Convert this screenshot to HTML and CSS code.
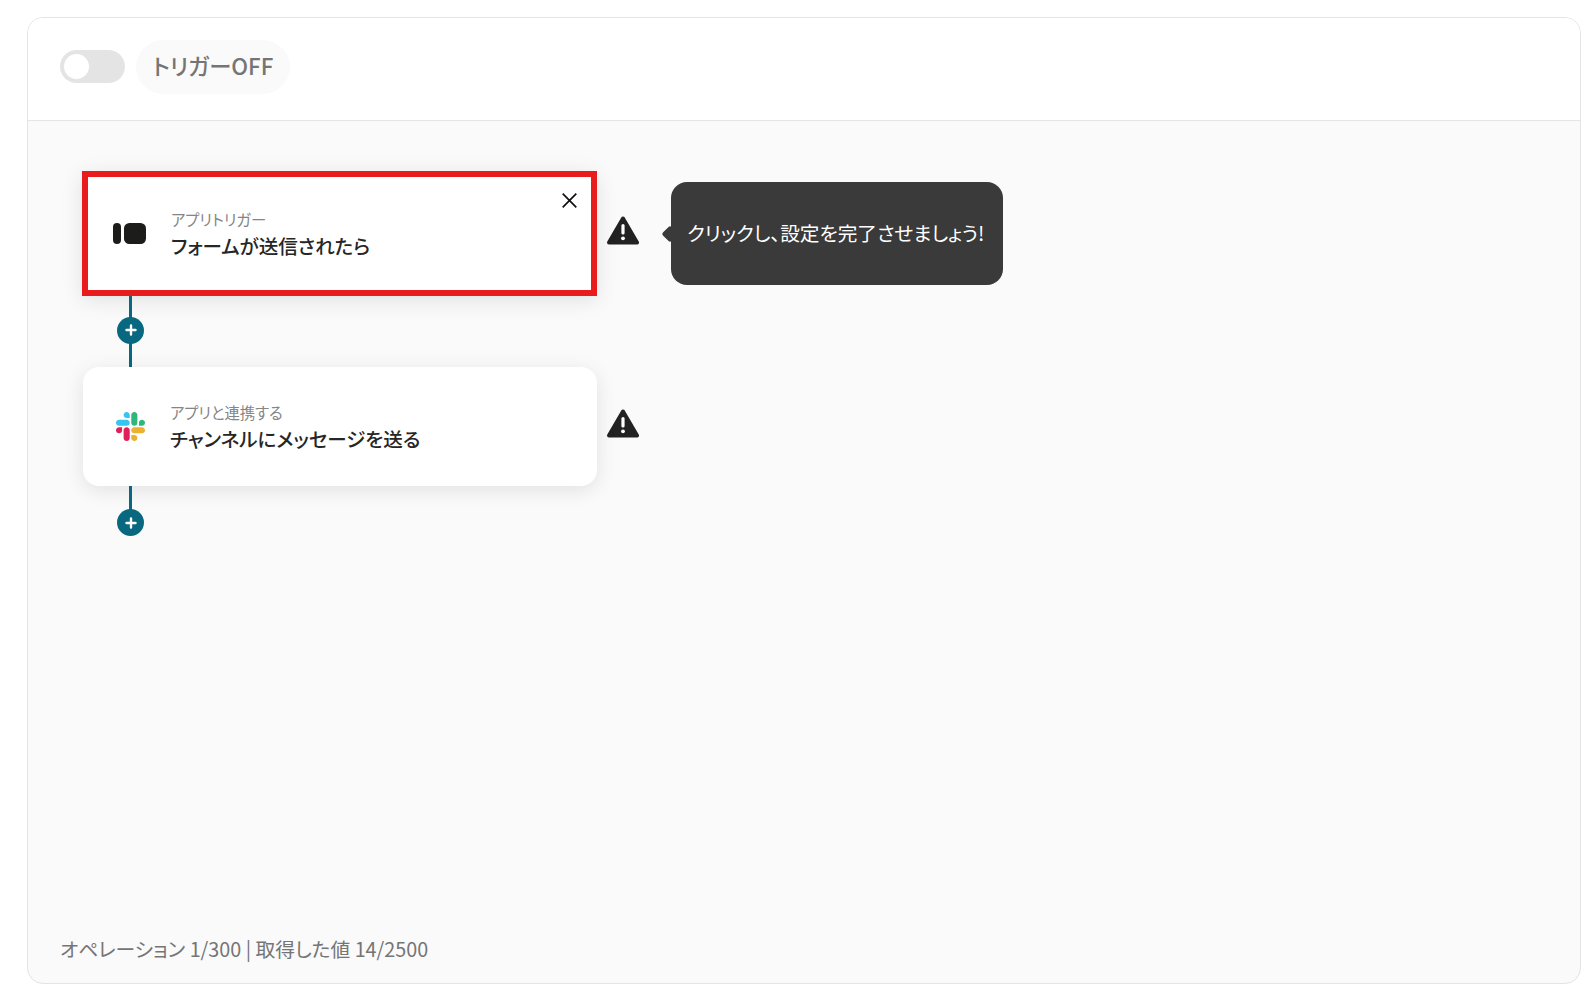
FILE: index.html
```html
<!DOCTYPE html>
<html lang="ja">
<head>
<meta charset="utf-8">
<title>フロー</title>
<link rel="stylesheet" href="styles.css">
</head>
<body>
<main class="frame">
  <header class="topbar">
    <span class="toggle"><span class="knob"></span></span>
    <span class="status">トリガーOFF</span>
  </header>
  <section class="canvas">
    <div class="step">
      <article class="card card-active">
        <svg class="app-icon form-icon" viewBox="0 0 33 21"><rect x="0" y="0" width="8" height="21" rx="4" fill="#1c1c1a"/><rect x="11" y="0" width="22" height="21" rx="5.5" fill="#1c1c1a"/></svg>
        <div class="card-text">
          <div class="card-label">アプリトリガー</div>
          <div class="card-title">フォームが送信されたら</div>
        </div>
        <svg class="close" viewBox="0 0 15 15"><path d="M.7.7l13.6 13.6M14.3.7L.7 14.3" stroke="#111" stroke-width="1.7" fill="none"/></svg>
      </article>
      <svg class="warn" viewBox="0 0 32 29"><path d="M16 2.5L30 26.5H2Z" fill="#222" stroke="#222" stroke-width="4" stroke-linejoin="round"/><rect x="14.4" y="8" width="3.2" height="10.5" rx="1.6" fill="#fff"/><circle cx="16" cy="22.3" r="1.9" fill="#fff"/></svg>
      <div class="tip">クリックし、設定を完了させましょう!</div>
    </div>
    <div class="link link-a"><span class="add"><svg viewBox="0 0 12 12" class="plus"><path d="M6 1.5v9M1.5 6h9" stroke="#fff" stroke-width="2.4" stroke-linecap="round"/></svg></span></div>
    <div class="step">
      <article class="card card-plain">
        <svg class="app-icon slack-icon" viewBox="0 0 122.8 122.8">
          <path d="M25.8 77.6c0 7.1-5.8 12.9-12.9 12.9S0 84.7 0 77.6s5.8-12.9 12.9-12.9h12.9v12.9z" fill="#e01e5a"/>
          <path d="M32.3 77.6c0-7.1 5.8-12.9 12.9-12.9s12.9 5.8 12.9 12.9v32.3c0 7.1-5.8 12.9-12.9 12.9s-12.9-5.8-12.9-12.9V77.6z" fill="#e01e5a"/>
          <path d="M45.2 25.8c-7.1 0-12.9-5.8-12.9-12.9S38.1 0 45.2 0s12.9 5.8 12.9 12.9v12.9H45.2z" fill="#36c5f0"/>
          <path d="M45.2 32.3c7.1 0 12.9 5.8 12.9 12.9s-5.8 12.9-12.9 12.9H12.9C5.8 58.1 0 52.3 0 45.2s5.8-12.9 12.9-12.9h32.3z" fill="#36c5f0"/>
          <path d="M97 45.2c0-7.1 5.8-12.9 12.9-12.9s12.9 5.8 12.9 12.9-5.8 12.9-12.9 12.9H97V45.2z" fill="#2eb67d"/>
          <path d="M90.5 45.2c0 7.1-5.8 12.9-12.9 12.9s-12.9-5.8-12.9-12.9V12.9C64.7 5.8 70.5 0 77.6 0s12.9 5.8 12.9 12.9v32.3z" fill="#2eb67d"/>
          <path d="M77.6 97c7.1 0 12.9 5.8 12.9 12.9s-5.8 12.9-12.9 12.9-12.9-5.8-12.9-12.9V97h12.9z" fill="#ecb22e"/>
          <path d="M77.6 90.5c-7.1 0-12.9-5.8-12.9-12.9s5.8-12.9 12.9-12.9h32.3c7.1 0 12.9 5.8 12.9 12.9s-5.8 12.9-12.9 12.9H77.6z" fill="#ecb22e"/>
        </svg>
        <div class="card-text">
          <div class="card-label">アプリと連携する</div>
          <div class="card-title">チャンネルにメッセージを送る</div>
        </div>
      </article>
      <svg class="warn" viewBox="0 0 32 29"><path d="M16 2.5L30 26.5H2Z" fill="#222" stroke="#222" stroke-width="4" stroke-linejoin="round"/><rect x="14.4" y="8" width="3.2" height="10.5" rx="1.6" fill="#fff"/><circle cx="16" cy="22.3" r="1.9" fill="#fff"/></svg>
    </div>
    <div class="link link-b"><span class="add"><svg viewBox="0 0 12 12" class="plus"><path d="M6 1.5v9M1.5 6h9" stroke="#fff" stroke-width="2.4" stroke-linecap="round"/></svg></span></div>
    <footer class="usage">オペレーション 1/300 | 取得した値 14/2500</footer>
  </section>
</main>
</body>
</html>
```

FILE: styles.css
```css
* { box-sizing: border-box; }
html, body { height: 100%; }
body {
  margin: 0;
  padding: 17px 7px 12px 27px;
  background: #fff;
  font-family: "Noto Sans CJK JP", "Noto Sans", sans-serif;
  font-feature-settings: "palt";
  overflow: hidden;
}
.frame {
  height: 967px;
  display: flex;
  flex-direction: column;
  border: 1px solid #e4e4e4;
  border-radius: 16px;
  overflow: hidden;
  background: #fafafa;
}
.topbar {
  height: 103px;
  flex: none;
  display: flex;
  align-items: center;
  gap: 11px;
  padding: 0 0 5px 32px;
  background: #fff;
  border-bottom: 1px solid #e4e4e4;
}
.toggle {
  width: 65px;
  height: 33px;
  border-radius: 17px;
  background: #e4e4e4;
  padding: 4px;
  display: flex;
}
.knob {
  width: 25px;
  height: 25px;
  border-radius: 50%;
  background: #fff;
}
.status {
  width: 154px;
  height: 54px;
  border-radius: 27px;
  background: #fafafa;
  color: #757575;
  font-size: 22.3px;
  font-weight: 500;
  display: flex;
  align-items: center;
  justify-content: center;
  padding-bottom: 3px;
}
.canvas {
  flex: 1;
  display: flex;
  flex-direction: column;
  padding: 50px 0 0 54px;
  min-height: 0;
}
.step {
  display: flex;
  align-items: center;
}
.card {
  position: relative;
  width: 515px;
  height: 119px;
  background: #fff;
  border-radius: 16px;
  display: flex;
  align-items: center;
  padding: 0 0 0 33px;
  box-shadow: 0 4px 20px rgba(0, 0, 0, .1);
}
.card-plain {
  margin-left: 1px;
  width: 514px;
}
.card-active {
  height: 125px;
  border: 6px solid #e81c1c;
  border-radius: 0;
  padding-left: 25px;
}
.app-icon { flex: none; display: block; }
.form-icon { width: 33px; height: 21px; margin-right: 25px; }
.slack-icon { width: 29px; height: 29px; margin-right: 25px; }
.card-text { display: flex; flex-direction: column; padding-top: 2px; }
.card-label {
  font-size: 15.35px;
  line-height: 20px;
  color: #858585;
}
.card-title {
  font-size: 19.55px;
  line-height: 30px;
  font-weight: 500;
  color: #262626;
  padding-top: 2px;
}
.close {
  position: absolute;
  top: 16px;
  right: 14px;
  width: 15px;
  height: 15px;
}
.warn {
  flex: none;
  width: 32px;
  height: 29px;
  margin: 0 0 6px 10px;
}
.tip {
  position: relative;
  margin-left: 32px;
  width: 332px;
  height: 103px;
  border-radius: 16px;
  background: #3a3a3a;
  color: #fff;
  font-size: 19.65px;
  display: flex;
  align-items: center;
  padding: 0 0 2px 16px;
  white-space: nowrap;
}
.tip::before {
  content: "";
  position: absolute;
  left: -7px;
  top: 46px;
  width: 12px;
  height: 12px;
  background: #3a3a3a;
  transform: rotate(45deg);
  border-radius: 2px;
}
.link {
  position: relative;
  width: 3px;
  margin-left: 47px;
  background: #086880;
  flex: none;
  display: flex;
  align-items: center;
  justify-content: center;
}
.link-a { height: 71px; padding-bottom: 3px; }
.link-b { height: 37px; align-items: flex-end; }
.add {
  flex: none;
  width: 27px;
  height: 27px;
  border-radius: 50%;
  background: #086880;
  display: flex;
  align-items: center;
  justify-content: center;
}
.link-b .add { margin-bottom: -13px; }
.plus { width: 12px; height: 12px; }
.usage {
  margin-top: auto;
  margin-left: -22px;
  padding-bottom: 21px;
  font-size: 19.75px;
  line-height: 26px;
  color: #757575;
}
```
